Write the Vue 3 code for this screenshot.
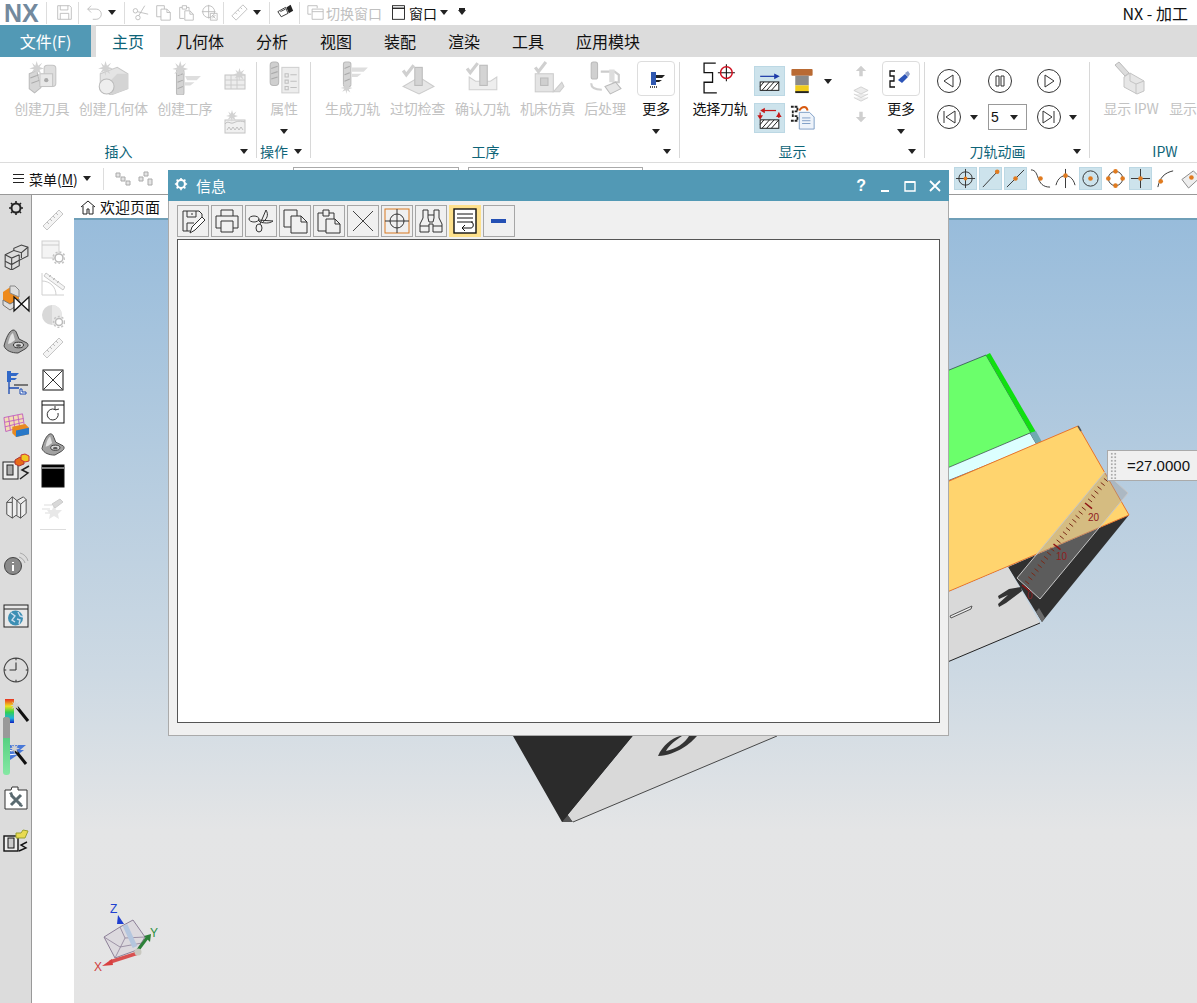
<template>
  <div class="app">
    <!-- 图标定义 -->
    <svg class="defs" width="0" height="0">
      <defs>
        <symbol id="spark" viewBox="0 0 16 16"><polygon points="8,0 9.5,5 14,2 11,6.5 16,8 11,9.5 13,14 8.5,11 8,16 6.5,11 2,13 5,9 0,8 5,6.5 3,2 6.5,5" fill="#d2d2d2" /></symbol>
        <symbol id="gCutter" viewBox="0 0 32 32"><path d="M4 12l7-3 4 16-6 5-5-4z" fill="#d6d6d6" stroke="#bbb" /><path d="M5 16l8-3M6 21l8-3" stroke="#aaa" /><rect x="18" y="4" width="11" height="20" rx="3" fill="#dedede" stroke="#c4c4c4" /><rect x="14" y="12" width="12" height="12" fill="#e8e8e8" stroke="#c4c4c4" /><circle cx="20" cy="18" r="2" fill="#aaa" /><use href="#spark" x="4" y="0" width="14" height="14" /></symbol>
        <symbol id="gBlock" viewBox="0 0 32 32"><polygon points="4,12 20,6 30,12 30,26 14,32 4,26" fill="#e4e4e4" stroke="#c8c8c8" /><polygon points="20,12 30,12 30,26 14,32 14,18" fill="#d4d4d4" /><circle cx="10" cy="24" r="7" fill="#eee" stroke="#bbb" /><use href="#spark" x="2" y="0" width="14" height="14" /></symbol>
        <symbol id="gOper" viewBox="0 0 32 32"><rect x="8" y="8" width="7" height="24" rx="2" fill="#d4d4d4" stroke="#bbb" /><path d="M9 14l5-2M9 20l5-2M9 26l5-2" stroke="#aaa" /><path d="M16 14h15l-4 4h-9zM16 20h9l-4 3h-5z" fill="#dedede" /><use href="#spark" x="4" y="0" width="15" height="15" /></symbol>
        <symbol id="gGridStar" viewBox="0 0 24 24"><rect x="2" y="8" width="20" height="14" fill="#ededed" stroke="#c4c4c4" /><path d="M2 13h20M2 18h20M8 8v14M14 8v14" stroke="#ccc" /><use href="#spark" x="10" y="1" width="13" height="13" /></symbol>
        <symbol id="gWave" viewBox="0 0 24 24"><rect x="2" y="10" width="20" height="13" fill="#f0f0f0" stroke="#c4c4c4" /><path d="M2 14c3-4 5 0 8-1s5-3 12-1M4 20l2-3 2 3 2-3 2 3 2-3 2 3 2-3 2 3" fill="none" stroke="#c0c0c0" /><use href="#spark" x="3" y="0" width="12" height="12" /></symbol>
        <symbol id="gAttr" viewBox="0 0 32 32"><rect x="14" y="6" width="16" height="24" fill="#ededed" stroke="#d0d0d0" /><path d="M17 12h3v3h-3zM17 18h3v3h-3zM17 24h3v3h-3zM22 13h6M22 19h6M22 25h6" fill="none" stroke="#c0c0c0" /><rect x="3" y="1" width="8" height="22" rx="3" fill="#cfcfcf" stroke="#b8b8b8" /><path d="M4 7l6-2M4 12l6-2M4 17l6-2" stroke="#aaa" /></symbol>
        <symbol id="gGen" viewBox="0 0 32 32"><rect x="7" y="1" width="7" height="23" rx="2" fill="#d4d4d4" stroke="#bbb" /><path d="M8 7l5-2M8 13l5-2M8 19l5-2" stroke="#aaa" /><path d="M15 6h15l-4 4H15zM15 12h9l-4 3h-5z" fill="#dedede" /><use href="#spark" x="3" y="20" width="14" height="11" /></symbol>
        <symbol id="gGouge" viewBox="0 0 32 32"><polygon points="2,24 14,17 20,17 31,24 17,31" fill="#e6e6e6" stroke="#ccc" /><rect x="13" y="6" width="7" height="17" fill="#d4d4d4" stroke="#bbb" /><path d="M2 9l3 4 7-9" fill="none" stroke="#d0d0d0" stroke-width="3" /></symbol>
        <symbol id="gVerify" viewBox="0 0 32 32"><path d="M3 15v12h26V15l-6 4H9z" fill="#eee" stroke="#d0d0d0" /><rect x="13" y="4" width="7" height="19" fill="#d4d4d4" stroke="#bbb" /><path d="M1 7l3 4 7-9" fill="none" stroke="#d0d0d0" stroke-width="3" /></symbol>
        <symbol id="gMachine" viewBox="0 0 32 32"><rect x="4" y="12" width="17" height="17" fill="#e4e4e4" stroke="#ccc" /><rect x="9" y="16" width="7" height="7" fill="#cfcfcf" stroke="#bbb" /><path d="M21 29l8-9 2 4-4 5z" fill="#ddd" stroke="#ccc" /><path d="M4 6l3 4 7-9" fill="none" stroke="#d0d0d0" stroke-width="3" /></symbol>
        <symbol id="gPost" viewBox="0 0 32 32"><rect x="3" y="1" width="6" height="16" rx="2" fill="#d0d0d0" stroke="#bbb" /><path d="M12 10h13l4 3v7H23" fill="none" stroke="#ccc" stroke-width="2" /><rect x="20" y="8" width="5" height="12" fill="#ddd" /><polygon points="16,24 26,20 31,26 21,31" fill="#e6e6e6" stroke="#bbb" /><path d="M3 21c0 5 4 6 10 6" fill="none" stroke="#d0d0d0" stroke-width="2" /></symbol>
        <symbol id="moreDrill" viewBox="0 0 24 24"><rect x="7" y="5" width="5" height="13" fill="#3058b0" /><path d="M12 8h9l-3 3h-6zM12 13h6l-3 2h-3z" fill="#222" /><path d="M6 20h7" stroke="#555" stroke-width="2" stroke-dasharray="1 1" /></symbol>
        <symbol id="pickPath" viewBox="0 0 32 32"><path d="M12 2H1v9h8v9H1v10h12" fill="none" stroke="#111" stroke-width="1.2" /><path d="M14 11h16M22 3v16" stroke="#111" stroke-width="1" /><circle cx="22" cy="11" r="5.5" fill="none" stroke="#d01020" stroke-width="1.4" /></symbol>
        <symbol id="hatchOne" viewBox="0 0 30 30"><path d="M5 10h19" stroke="#1c3aa8" stroke-width="1.3" /><polygon points="20,7 26,10 20,13" fill="#1c3aa8" /><rect x="5" y="16" width="20" height="9" fill="#fff" stroke="#111" /><path d="M7 25l8-9M12 25l8-9M17 25l8-9M5 21l4-5" stroke="#111" /></symbol>
        <symbol id="hatchTwo" viewBox="0 0 30 30"><path d="M8 7h14" stroke="#c41818" stroke-width="1.3" /><polygon points="10,4 5,7 10,10" fill="#c41818" /><path d="M5 9v6M25 9v6" stroke="#c41818" stroke-width="1.3" /><polygon points="2,12 8,12 5,17" fill="#c41818" /><polygon points="22,14 28,14 25,9" fill="#c41818" /><rect x="5" y="17" width="20" height="9" fill="#fff" stroke="#111" /><path d="M7 26l8-9M12 26l8-9M17 26l8-9M5 22l4-5" stroke="#111" /></symbol>
        <symbol id="toolColor" viewBox="0 0 24 28"><rect x="1" y="1" width="22" height="7" rx="1" fill="#b96a33" /><rect x="5" y="8" width="14" height="10" fill="#8a8a8a" /><rect x="5" y="18" width="14" height="7" fill="#f0cc1c" /><path d="M5 25h14" stroke="#222" stroke-width="2" /></symbol>
        <symbol id="docOut" viewBox="0 0 28 28"><path d="M1 3h7v5H3v5h5v5H1" fill="none" stroke="#222" stroke-width="2" stroke-dasharray="3 1" /><path d="M10 9h11l5 5v13H10z" fill="#eef3fa" stroke="#7a9ac4" /><path d="M13 15h9M13 18h9M13 21h9" stroke="#7a9ac4" /><path d="M10 7c3-5 8-5 9 0" fill="none" stroke="#d85a10" stroke-width="2" /></symbol>
        <symbol id="upArrow" viewBox="0 0 14 14"><path d="M7 1l6 6H9v6H5V7H1z" fill="#cfcfcf" /></symbol>
        <symbol id="downArrow" viewBox="0 0 14 14"><path d="M7 13L1 7h4V1h4v6h4z" fill="#cfcfcf" /></symbol>
        <symbol id="layers" viewBox="0 0 18 18"><path d="M1 5l8-4 8 4-8 4zM1 9l8 4 8-4M1 13l8 4 8-4" fill="#ececec" stroke="#cfcfcf" /></symbol>
        <symbol id="moreTorch" viewBox="0 0 24 24"><path d="M6 4H1v5h4v5H1v6h5" fill="none" stroke="#111" stroke-width="1.3" /><path d="M9 13l7-6 3 3-6 6z" fill="#2c54b8" /><path d="M16 6l3-2 2 3-2 3z" fill="#8fa0c8" /></symbol>
        <symbol id="ipw" viewBox="0 0 34 34"><path d="M1 4l4-3 10 11-4 3z" fill="#dcdcdc" stroke="#bbb" /><path d="M10 26V16l6-4 14 8v10l-7 3z" fill="#e6e6e6" stroke="#c4c4c4" /><path d="M16 12v8l6 3v10M22 23l8-3" fill="none" stroke="#c4c4c4" /></symbol>

        <symbol id="save" viewBox="0 0 20 20"><path d="M2 2h14l2 2v14H2z" fill="none" stroke="currentColor" /><path d="M5 2v5h9V2M5 18v-7h10v7" fill="none" stroke="currentColor" /></symbol>
        <symbol id="undo" viewBox="0 0 20 20"><path d="M2 6h10a5.5 5.5 0 0 1 0 12H8M6 2L2 6l4 4" fill="none" stroke="currentColor" /></symbol>
        <symbol id="scissors" viewBox="0 0 20 20"><circle cx="4" cy="8" r="2.6" fill="none" stroke="currentColor" /><circle cx="7" cy="16" r="2.6" fill="none" stroke="currentColor" /><path d="M6.3 9L19 12M8 13.6L15 2" fill="none" stroke="currentColor" /></symbol>
        <symbol id="copy" viewBox="0 0 20 20"><path d="M2 2h9v4M7 6h7l4 4v9H7zM7 15H2V2M14 6v4h4" fill="none" stroke="currentColor" /></symbol>
        <symbol id="paste" viewBox="0 0 20 20"><path d="M7 17H2V4h3V2h5v2h3v3M5 4v2h5V4M8 8h6l4 4v7H8zM14 8v4h4" fill="none" stroke="currentColor" /></symbol>
        <symbol id="deleteBox" viewBox="0 0 20 20"><circle cx="9" cy="9" r="7" fill="none" stroke="currentColor" /><path d="M9 1v16M1 9h16M11 11h8v8h-8zM13 13l4 4M17 13l-4 4" fill="none" stroke="currentColor" /></symbol>
        <symbol id="ruler" viewBox="0 0 20 20"><path d="M14 1l5 5L6 19l-5-5z" fill="none" stroke="currentColor" /><path d="M5 10l2 2M8 7l2 2M11 4l2 2" stroke="currentColor" /></symbol>
        <symbol id="flash" viewBox="0 0 20 20"><path d="M1 9l9-5 3 7-8 4z" fill="#fff" stroke="#222" /><path d="M11 4l5-3 3 7-5 3z" fill="#222" /><path d="M4 9l6-3" stroke="#222" /></symbol>
        <symbol id="winSwitch" viewBox="0 0 20 20"><path d="M1 2h11v3M1 2v10h4M6 6h13v12H6zM6 9h13" fill="none" stroke="currentColor" /></symbol>
        <symbol id="window" viewBox="0 0 16 20"><rect x="1" y="2" width="14" height="16" fill="#fff" stroke="#111" /><path d="M1 5h14" stroke="#111" stroke-width="1.5" /></symbol>

        <symbol id="tbSave" viewBox="0 0 26 26"><path d="M3 23V3h16l3 3v5M7 3v6h9V3M12 5v2M3 23h7M7 23v-8h7" fill="none" stroke="#333" /><path d="M10 25l2-6 10-10 3 3-10 10z" fill="#fff" stroke="#333" /></symbol>
        <symbol id="tbPrint" viewBox="0 0 26 26"><path d="M7 8V2h12v6M7 20H2V8h22v12h-5M7 13h12v11H7z" fill="none" stroke="#333" /></symbol>
        <symbol id="tbCut" viewBox="0 0 26 26"><ellipse cx="6" cy="11" rx="5" ry="3" fill="none" stroke="#333" /><ellipse cx="11" cy="20" rx="3" ry="4" fill="none" stroke="#333" /><path d="M10 12l15 1c-4 3-9 2-13 1zM12 16l6-14c3 5 1 9-4 13" fill="none" stroke="#333" /></symbol>
        <symbol id="tbCopy" viewBox="0 0 26 26"><path d="M9 19H2V2h13v6M9 8h10l6 6v11H9zM19 8v6h6" fill="none" stroke="#333" /></symbol>
        <symbol id="tbPaste" viewBox="0 0 26 26"><path d="M10 23H2V5h5V2h6v3h5v6M7 5v3h6V5M10 11h9l5 5v9H10zM19 11v5h5" fill="none" stroke="#333" /></symbol>
        <symbol id="tbX" viewBox="0 0 26 26"><path d="M3 3l20 20M23 3L3 23" stroke="#444" /></symbol>
        <symbol id="tbCross" viewBox="0 0 26 26"><rect x="1" y="1" width="24" height="24" fill="none" stroke="#d87820" /><circle cx="13" cy="13" r="7" fill="none" stroke="#333" /><path d="M1 13h24M13 1v24" stroke="#333" /></symbol>
        <symbol id="tbBino" viewBox="0 0 26 26"><path d="M5 2h5v8l1 4h4l1-4V2h5v8l3 6v8h-9v-8h-4v8H2v-8l3-6zM2 18h9M15 18h9M10 7h6" fill="none" stroke="#333" /></symbol>
        <symbol id="tbWrap" viewBox="0 0 26 26"><rect x="2" y="1" width="22" height="24" fill="#fff" stroke="#111" stroke-width="1.4" /><path d="M5 6h16M5 10h16M5 14h16M19 14c3 0 3 6 0 6H10M13 17l-3 3 3 3" fill="none" stroke="#111" /></symbol>
        <symbol id="tbMinus" viewBox="0 0 26 26"><rect x="5" y="11" width="15" height="4" fill="#2450b4" /></symbol>

        <symbol id="sCenter" viewBox="0 0 22 22"><circle cx="11" cy="11" r="7" fill="none" stroke="#333" /><path d="M1 11h20M11 1v20" stroke="#333" /><circle cx="11" cy="11" r="2" fill="#e07b20" /></symbol>
        <symbol id="sEnd" viewBox="0 0 22 22"><path d="M3 20L18 4" stroke="#333" /><circle cx="18" cy="4" r="2.4" fill="#e07b20" /></symbol>
        <symbol id="sMid" viewBox="0 0 22 22"><path d="M2 20L20 2" stroke="#333" /><circle cx="11" cy="11" r="2.4" fill="#e07b20" /></symbol>
        <symbol id="sCurve" viewBox="0 0 22 22"><path d="M1 2c10 0 4 18 20 18" fill="none" stroke="#333" /><circle cx="11" cy="11" r="2.4" fill="#e07b20" /></symbol>
        <symbol id="sTee" viewBox="0 0 22 22"><path d="M1 18c2-8 7-10 10-10s8 2 10 10M11 1v20" fill="none" stroke="#333" /><circle cx="11" cy="8" r="2.4" fill="#e07b20" /></symbol>
        <symbol id="sRing" viewBox="0 0 22 22"><circle cx="11" cy="11" r="8" fill="none" stroke="#333" /><circle cx="11" cy="11" r="2.4" fill="#e07b20" /></symbol>
        <symbol id="sQuad" viewBox="0 0 22 22"><circle cx="11" cy="11" r="7.5" fill="none" stroke="#333" /><circle cx="11" cy="3.5" r="2.4" fill="#e07b20" /><circle cx="11" cy="18.5" r="2.4" fill="#e07b20" /><circle cx="3.5" cy="11" r="2.4" fill="#e07b20" /><circle cx="18.5" cy="11" r="2.4" fill="#e07b20" /></symbol>
        <symbol id="sPlus" viewBox="0 0 22 22"><path d="M1 11h20M11 1v20" stroke="#333" /><circle cx="11" cy="11" r="2.4" fill="#e07b20" /></symbol>
        <symbol id="sArc" viewBox="0 0 22 22"><path d="M3 20C5 10 10 5 19 3" fill="none" stroke="#333" /><circle cx="6" cy="14" r="2.4" fill="#e07b20" /></symbol>
        <symbol id="sFace" viewBox="0 0 22 22"><polygon points="2,12 14,3 21,10 9,21" fill="#eee" stroke="#888" /><circle cx="12" cy="10" r="2.4" fill="#e07b20" /></symbol>

        <symbol id="rGear" viewBox="0 0 16 16"><circle cx="8" cy="8" r="4.5" fill="none" stroke="#222" stroke-width="2" /><path d="M8 1v2.5M8 12.5V15M1 8h2.5M12.5 8H15M3 3l1.700 1.700M11.300 11.300L13 13M13 3l-1.700 1.700M4.700 11.300L3 13" stroke="#222" stroke-width="1.6" /></symbol>
        <symbol id="rBlocks" viewBox="0 0 24 24"><path d="M2 10l8-4V4l7-3 6 2v8l-8 4v5l-7 4-6-3z" fill="#dcdcdc" stroke="#444" /><path d="M2 10l6 3 7-3M8 13v11M2 16l6 3 7-4M10 6l7 2 6-5M17 8v5M15 10v5" fill="none" stroke="#444" /></symbol>
        <symbol id="rOrange" viewBox="0 0 28 28"><polygon points="1,7 10,1 17,5 17,19 8,25 1,20" fill="#ee8a1c" /><polygon points="1,15 8,19 17,14 17,19 8,25 1,20" fill="#ddd" stroke="#777" /><polygon points="8,1 13,1 17,5 17,12 8,8" fill="#ddd" stroke="#888" /><path d="M12 12l15 14V12L12 26z" fill="#fff" stroke="#111" stroke-width="1.2" /></symbol>
        <symbol id="rPart" viewBox="0 0 26 26"><path d="M1 18C3 10 6 3 10 2c2 0 3 1 4 4l2 5 8 4c2 2 1 4-2 6l-7 4C9 25 3 23 1 18z" fill="#a2a2a2" stroke="#444" /><path d="M5 16c1-6 3-10 5-11l2 7-4 3z" fill="#e2e2e2" /><ellipse cx="15.500" cy="17" rx="5" ry="2.800" fill="#d8d8d8" stroke="#333" /><ellipse cx="15.500" cy="17.500" rx="2.500" ry="1.300" fill="#555" /></symbol>
        <symbol id="rTree" viewBox="0 0 24 24"><rect x="3" y="0" width="4" height="11" fill="#3068c8" /><path d="M7 2h8l-3 3H7zM7 7h6l-2 2H7z" fill="#3068c8" /><path d="M5 11v12M5 17h10" stroke="#1848b0" stroke-width="1.3" /><path d="M10 14h14" stroke="#111" /><path d="M16 18h2v3h4v2h-6z" fill="#fff" stroke="#1848b0" /></symbol>
        <symbol id="rTable" viewBox="0 0 28 26"><polygon points="1,5 21,1 23,14 3,20" fill="#f3ddb4" stroke="#c060c0" /><path d="M6 4l2 15M11 3l2 15M16 2l2 14M2 10l20-4M2 15l20-5" stroke="#c060c0" /><polygon points="10,15 24,12 28,16 28,23 14,26 10,22" fill="#e88a20" /><polygon points="14,19 28,16 28,23 14,26" fill="#2878c8" /></symbol>
        <symbol id="rMach" viewBox="0 0 28 28"><rect x="1" y="9" width="15" height="17" fill="#eee" stroke="#222" /><rect x="5" y="12" width="6" height="10" fill="#aaa" stroke="#222" /><path d="M18 26l8-6-6-3 7-4" fill="none" stroke="#222" stroke-width="1.5" /><path d="M13 7l5-3 4 2v5l-5 2-4-2z" fill="#e86a18" stroke="#a33" /><path d="M19 2l4-1 4 2v5l-4 1-4-2z" fill="#f0c820" stroke="#c33" /></symbol>
        <symbol id="rBooks" viewBox="0 0 24 26"><path d="M2 8l6-6 5 4 7-4 3 3v15l-6 5-5-3-4 3-6-4z" fill="#eee" stroke="#444" /><path d="M8 2v6L2 8M8 8v17M13 6v16M17 25V10l-4-4M17 10l6-5" fill="none" stroke="#444" /></symbol>
        <symbol id="rInfo" viewBox="0 0 26 26"><circle cx="10" cy="16" r="8.5" fill="#8a8a8a" stroke="#444" /><path d="M10 12v1M10 15v6" stroke="#fff" stroke-width="2" /><path d="M16 7c3 1 5 3 6 6M17 3c4 1 7 4 8 8" fill="none" stroke="#aaa" /></symbol>
        <symbol id="rGlobe" viewBox="0 0 26 24"><rect x="1" y="1" width="24" height="22" fill="#e8e8e8" stroke="#222" /><path d="M1 5h24" stroke="#222" /><circle cx="12.500" cy="14" r="7.500" fill="#3d8fb4" /><path d="M8 9l4 3-3 4 3 2M15 8l2 4 3 1M14 15l3 1-1 4" fill="none" stroke="#cde" stroke-width="1.4" /></symbol>
        <symbol id="rClock" viewBox="0 0 24 24"><circle cx="12" cy="12" r="11" fill="none" stroke="#444" /><path d="M12 12V5M12 12H6M12 1v2M12 21v2M1 12h2M21 12h2" stroke="#333" /></symbol>
        <symbol id="rFringe" viewBox="0 0 28 28"><defs><linearGradient id="rainbow" x1="0" x2="0" y1="0" y2="1"><stop offset="0" stop-color="#e83020" /><stop offset=".3" stop-color="#f0e020" /><stop offset=".55" stop-color="#30d050" /><stop offset=".8" stop-color="#20b0e0" /><stop offset="1" stop-color="#1020c0" /></linearGradient></defs><rect x="3" y="1" width="9" height="24" fill="url(#rainbow)" /><path d="M14 8l12 15" stroke="#111" stroke-width="3" /><use href="#spark" x="8" y="2" width="11" height="11" /></symbol>
        <symbol id="rWand" viewBox="0 0 28 28"><path d="M4 4h20l-6 5 4 0-8 6-6 4z" fill="#4878d8" /><path d="M4 9l10 1M5 14l10-1" stroke="#fff" /><path d="M12 8l12 15" stroke="#111" stroke-width="3" /><use href="#spark" x="7" y="2" width="11" height="11" /></symbol>
        <symbol id="rTools" viewBox="0 0 24 24"><path d="M1 4h6l1-3h6v3h9v19H1z" fill="#fff" stroke="#333" /><path d="M7 19L17 9M7 9l10 10" stroke="#5a6a70" stroke-width="3" /><path d="M5 7l3-1 1 3-2 1zM16 18l3 1-1 2-3-1z" fill="#5a6a70" /></symbol>
        <symbol id="rMachFolder" viewBox="0 0 26 26"><rect x="1" y="8" width="14" height="15" fill="#eee" stroke="#111" stroke-width="1.4" /><rect x="5" y="10" width="6" height="10" fill="#ccc" stroke="#111" /><path d="M16 23l7-3-5-3 6-3" fill="none" stroke="#111" stroke-width="1.4" /><path d="M13 5h5l2-3 5 1-3 7H13z" fill="#e8da50" stroke="#99a030" /></symbol>

        <symbol id="pRuler" viewBox="0 0 24 24"><path d="M18 2l4 4L6 22l-4-4z" fill="#f4f4f4" stroke="#c6c6c6" /><path d="M6 14l2 2M9 11l2 2M12 8l2 2M15 5l2 2" stroke="#bbb" /></symbol>
        <symbol id="pWinGear" viewBox="0 0 24 24"><rect x="1" y="1" width="17" height="17" fill="#f4f4f4" stroke="#d0d0d0" /><path d="M1 5h17" stroke="#ccc" /><circle cx="18" cy="18" r="4" fill="#fff" stroke="#bbb" stroke-width="1.6" /><circle cx="18" cy="18" r="6" fill="none" stroke="#c4c4c4" stroke-dasharray="2 2" stroke-width="1.6" /></symbol>
        <symbol id="pAngle" viewBox="0 0 24 24"><path d="M1 1v22h22" fill="none" stroke="#d0d0d0" /><path d="M1 9c8 0 14 6 14 14" fill="none" stroke="#d0d0d0" /><path d="M5 1l19 14-2 3L3 4z" fill="#f4f4f4" stroke="#c8c8c8" /><path d="M8 5l2-2M12 8l2-2M16 11l2-2" stroke="#bbb" /></symbol>
        <symbol id="pDisc" viewBox="0 0 24 24"><circle cx="11" cy="11" r="10" fill="#d8d8d8" /><path d="M11 1a10 10 0 0 1 0 20z" fill="#e8e8e8" /><circle cx="18" cy="18" r="3.500" fill="#fff" stroke="#bbb" stroke-width="1.5" /><circle cx="18" cy="18" r="5.500" fill="none" stroke="#c4c4c4" stroke-dasharray="2 2" stroke-width="1.5" /></symbol>
        <symbol id="pCross" viewBox="0 0 24 24"><rect x="2" y="2" width="20" height="20" fill="#fff" stroke="#111" /><path d="M3 3l18 18M21 3L3 21" stroke="#333" /></symbol>
        <symbol id="pRotate" viewBox="0 0 24 24"><rect x="1" y="1" width="22" height="22" fill="#fff" stroke="#111" /><path d="M1 5h22" stroke="#111" /><path d="M17 13a5.500 5.500 0 1 1-3-3.500M14 6l0 4 4-1" fill="none" stroke="#333" /></symbol>
        <symbol id="pBlack" viewBox="0 0 24 24"><rect x="1" y="1" width="22" height="22" fill="#000" stroke="#111" /><path d="M1 4h22" stroke="#fff" /></symbol>
        <symbol id="pStar" viewBox="0 0 24 24"><path d="M3 9h8M1 13h8M4 17h6" stroke="#ddd" /><polygon points="13,9 15,14 21,14 17,18 18,23 13,20 8,23 9,18 6,14 11,14" fill="#e8e8e8" /><path d="M11 8l8-5 3 3-8 6z" fill="#d8d8d8" stroke="#ccc" /></symbol>
        <symbol id="home" viewBox="0 0 16 16"><path d="M1 8l7-6 7 6M3 7v8h4v-5h2v5h4V7" fill="none" stroke="#222" /></symbol>
      </defs>
    </svg>

    <header class="quick">
      <span class="logo">NX</span>
      <template v-for="(item, i) in quickItems" :key="i">
        <i v-if="item.type === 'sep'" class="qsep"></i>
        <i v-else-if="item.type === 'caret'" class="caret qcaret"></i>
        <svg v-else class="qicon" :class="{ live: item.live }"><use :href="'#' + item.icon" /></svg>
        <span v-if="item.text" class="qtext" :class="{ live: item.live }">{{ item.text }}</span>
      </template>
      <i class="caret qcaret bar"></i>
      <span class="apptitle">NX - 加工</span>
    </header>

    <nav class="tabs">
      <span class="tab file">文件(F)</span>
      <span v-for="(t, i) in tabs" :key="t" class="tab" :class="{ on: i === 0 }">{{ t }}</span>
    </nav>

    <section class="ribbon">
      <div class="group g1">
        <div class="gbody">
          <div v-for="b in insertBtns" :key="b.text" class="big off w71">
            <svg class="bigicon"><use :href="'#' + b.icon" /></svg><span>{{ b.text }}</span>
          </div>
          <div class="stack">
            <svg class="sm"><use href="#gGridStar" /></svg>
            <svg class="sm"><use href="#gWave" /></svg>
          </div>
        </div>
        <div class="glabel"><span>插入</span><i class="caret"></i></div>
      </div>

      <div class="group g2">
        <div class="gbody">
          <div class="big off fill">
            <svg class="bigicon"><use href="#gAttr" /></svg><span>属性</span><i class="caret down"></i>
          </div>
        </div>
        <div class="glabel"><span>操作</span><i class="caret"></i></div>
      </div>

      <div class="group g3">
        <div class="gbody">
          <div v-for="b in operBtns" :key="b.text" class="big off" :style="{ width: b.w + 'px' }">
            <svg class="bigicon"><use :href="'#' + b.icon" /></svg><span>{{ b.text }}</span>
          </div>
          <div class="big more">
            <div class="morebox"><svg class="mi"><use href="#moreDrill" /></svg></div>
            <span>更多</span><i class="caret down"></i>
          </div>
        </div>
        <div class="glabel"><span>工序</span><i class="caret"></i></div>
      </div>

      <div class="group g4">
        <div class="gbody">
          <div class="big pick">
            <svg class="bigicon"><use href="#pickPath" /></svg><span>选择刀轨</span>
          </div>
          <div class="hatchcol">
            <div class="hatch"><svg><use href="#hatchOne" /></svg></div>
            <div class="hatch"><svg><use href="#hatchTwo" /></svg></div>
          </div>
          <div class="colorcol">
            <div class="withcaret"><svg class="tc"><use href="#toolColor" /></svg><i class="caret"></i></div>
            <svg class="tc doc"><use href="#docOut" /></svg>
          </div>
          <div class="arrows">
            <svg class="arr"><use href="#upArrow" /></svg>
            <svg class="lay"><use href="#layers" /></svg>
            <svg class="arr"><use href="#downArrow" /></svg>
          </div>
          <div class="big more">
            <div class="morebox"><svg class="mi"><use href="#moreTorch" /></svg></div>
            <span>更多</span><i class="caret down"></i>
          </div>
        </div>
        <div class="glabel"><span>显示</span><i class="caret"></i></div>
      </div>

      <div class="group g5">
        <div class="player">
          <div class="pcell">
            <svg class="circle" viewBox="0 0 24 24"><circle cx="12" cy="12" r="11.500" /><path d="M16 6v12L7 12z" /></svg>
          </div>
          <div class="pcell mid">
            <svg class="circle" viewBox="0 0 24 24"><circle cx="12" cy="12" r="11.500" /><path d="M8 7h3v10H8zM13 7h3v10h-3z" /></svg>
          </div>
          <div class="pcell last">
            <svg class="circle" viewBox="0 0 24 24"><circle cx="12" cy="12" r="11.500" /><path d="M8 6v12l9-6z" /></svg>
          </div>
          <div class="pcell">
            <svg class="circle" viewBox="0 0 24 24"><circle cx="12" cy="12" r="11.500" /><path d="M7 6v12M18 6v12L9 12z" /></svg><i class="caret"></i>
          </div>
          <div class="pcell mid">
            <div class="speed"><span>5</span><i class="caret"></i></div>
          </div>
          <div class="pcell last">
            <svg class="circle" viewBox="0 0 24 24"><circle cx="12" cy="12" r="11.500" /><path d="M17 6v12M6 6v12l9-6z" /></svg><i class="caret"></i>
          </div>
        </div>
        <div class="glabel"><span>刀轨动画</span><i class="caret"></i></div>
      </div>

      <div class="group g6">
        <div class="gbody">
          <div class="big off ipw">
            <svg class="bigicon"><use href="#ipw" /></svg><span>显示 IPW</span>
          </div>
          <div class="big off ipw next"><span class="blank"></span><span>显示</span></div>
        </div>
        <div class="glabel"><span>IPW</span></div>
      </div>
    </section>

    <div class="selbar">
      <span class="menu"><span class="burger"></span>菜单(<u>M</u>)<i class="caret"></i></span>
      <i class="selsep"></i>
      <svg class="seli" viewBox="0 0 16 16"><path d="M1 2h4v4H1zM6 6h4v4H6zM11 10h4v4h-4z" fill="#e4e4e4" stroke="#aaa" /></svg>
      <svg class="seli" viewBox="0 0 16 16"><path d="M6 1h4v4H6zM1 6h4v4H1zM10 8h4v6h-4z" fill="#e4e4e4" stroke="#aaa" /></svg>
      <span class="filter one"></span>
      <span class="filter two"></span>
      <div class="snaps">
        <span v-for="(s, i) in snaps" :key="i" class="snap" :class="{ on: s.on }">
          <svg><use :href="'#' + s.icon" /></svg>
        </span>
      </div>
    </div>

    <main class="body">
      <aside class="rail">
        <svg v-for="r in railIcons" :key="r.icon + r.top" class="railicon" :style="{ marginTop: r.top + 'px', width: r.size + 'px', height: r.size + 'px' }"><use :href="'#' + r.icon" /></svg>
        <div class="railscroll"><i></i></div>
      </aside>
      <aside class="rail2">
        <span v-for="(p, i) in paletteIcons" :key="i" class="palitem"><svg><use :href="'#' + p" /></svg></span>
        <hr />
      </aside>
      <div class="stage">
        <div class="doctabs"><span class="doctab"><svg><use href="#home" /></svg>欢迎页面</span></div>
        <div class="view">
          <svg class="scene" viewBox="74 220 1123 783">
            <!-- 模型 -->
            <polygon points="900,390 986,355 1031,433 900,490" fill="#6bff6b" stroke="#123" stroke-width=".6" />
            <polygon points="986,355 990,353 1036,432 1031,433" fill="#10e010" />
            <polygon points="900,488 1030,433 1037,445 900,500" fill="#dcffff" stroke="#223" stroke-width=".6" />
            <polygon points="1030,433 1036,431 1042,442 1037,445" fill="#6faab0" />
            <polygon points="1129,515 1042,622 1008,567" fill="#303030" />
            <polygon points="900,502 1078,426 1129,515 900,612" fill="#ffd46e" stroke="#e8742a" stroke-width="1" />
            <path d="M1078 426l3 5" stroke="#555" stroke-width="1.500" />
            <polygon points="900,613 1008,567 1040,623 900,682" fill="#d9d9d9" />
            <path d="M900 682L1040 623" stroke="#222" stroke-width="1" />
            <polygon points="1036,612 1042,622 1045,618 1039,608" fill="#6a6a6a" />
            <path d="M950 616l22-10-1 3-20 9z" fill="#eee" stroke="#555" />
            <path d="M1021 587l-12 2-11 7 1 3 9-4-10 9 1 3 7-4 16-12z" fill="#333" />
            <!-- 下方模型 -->
            <polygon points="513,736 633,736 568,815 573,822 562,822" fill="#2b2b2b" />
            <polygon points="562,822 568,815 573,822" fill="#555" />
            <polygon points="633,736 777,736 573,822 568,815" fill="#d9d9d9" />
            <path d="M777 736L573 822" stroke="#222" stroke-width=".8" />
            <path d="M658 756c4-10 14-18 22-20h17c-6 7-20 19-39 20z" fill="#333" />
            <path d="M666 751c3-6 10-11 16-15h7c-4 7-13 13-23 15z" fill="#d9d9d9" />
            <!-- 标尺 -->
            <polygon points="1105,472 1128,493 1040,599 1017,578" fill="#9a9a9a" fill-opacity=".42" stroke="#c6c6c6" />
            <line v-for="t in rulerTicks" :key="t.i" :x1="t.x1" :y1="t.y1" :x2="t.x2" :y2="t.y2" :stroke="t.major ? '#8e1414' : '#7a2a18'" :stroke-width="t.major ? 1.5 : 1" />
            <text x="1088" y="521" class="rtext">20</text>
            <text x="1056" y="560" class="rtext">10</text>
            <text x="1027" y="599" class="rtext">0</text>
            <!-- 坐标系 -->
            <polygon points="104,937 120,927 133,920 145,937 137,950 115,958" fill="#dcd9de" stroke="#8d8098" />
            <path d="M120 927l5 11 20-1M125 938l-10 20M104 937l16 10 22-4" fill="none" stroke="#8d8098" stroke-width=".8" />
            <path d="M125 925l10 22" stroke="#b4c6de" stroke-width="5" />
            <polygon points="117,924 124,924 118,915" fill="#1f3fd0" />
            <path d="M138 950l9-12" stroke="#2c8038" stroke-width="3" />
            <polygon points="144,936 150,942 151,934" fill="#2c8038" />
            <path d="M138 953l-28 9" stroke="#d85050" stroke-width="3.500" />
            <polygon points="112,959 113,965 102,966" fill="#d84040" />
            <circle cx="138" cy="952" r="3.500" fill="#c8c8c0" />
            <text x="110" y="913" class="axis" fill="#2040d0">Z</text>
            <text x="150" y="937" class="axis" fill="#2c9040">Y</text>
            <text x="94" y="971" class="axis" fill="#d04040">X</text>
          </svg>
          <div class="readout"><span class="grip"></span><span>=27.0000</span></div>
        </div>
      </div>
    </main>

    <!-- 信息窗口 -->
    <section class="dialog">
      <div class="dtitle">
        <svg class="dgear" viewBox="0 0 16 16"><circle cx="8" cy="8" r="4.500" fill="none" stroke="#fff" stroke-width="2.400" /><path d="M8 1v2.500M8 12.500V15M1 8h2.500M12.500 8H15M3 3l1.700 1.700M11.300 11.300L13 13M13 3l-1.700 1.700M4.700 11.300L3 13" stroke="#fff" stroke-width="1.800" /></svg>
        <span class="dname">信息</span>
        <span class="dq">?</span>
        <svg class="dctl min" viewBox="0 0 14 14"><path d="M2 12h8" stroke="#fff" stroke-width="2" /></svg>
        <svg class="dctl max" viewBox="0 0 14 14"><path d="M2 3h10v9H2z" fill="none" stroke="#fff" stroke-width="1.400" /><path d="M2 3h10" stroke="#fff" stroke-width="2" /></svg>
        <svg class="dctl close" viewBox="0 0 14 14"><path d="M2 2l10 10M12 2L2 12" stroke="#fff" stroke-width="1.800" /></svg>
      </div>
      <div class="dtools">
        <span v-for="b in dialogTools" :key="b" class="dbtn" :class="{ active: b === 'tbWrap' }"><svg><use :href="'#' + b" /></svg></span>
      </div>
      <div class="dtext"></div>
    </section>
  </div>
</template>

<script setup>
// 快速访问工具条
const quickItems = [
  { type: 'sep' },
  { icon: 'save' },
  { type: 'sep' },
  { icon: 'undo' },
  { type: 'caret' },
  { type: 'sep' },
  { icon: 'scissors' },
  { icon: 'copy' },
  { icon: 'paste' },
  { icon: 'deleteBox' },
  { type: 'sep' },
  { icon: 'ruler' },
  { type: 'caret' },
  { type: 'sep' },
  { icon: 'flash', live: true },
  { type: 'sep' },
  { icon: 'winSwitch', text: '切换窗口' },
  { icon: 'window', text: '窗口', live: true },
  { type: 'caret' }
];

const tabs = ['主页', '几何体', '分析', '视图', '装配', '渲染', '工具', '应用模块'];

const insertBtns = [
  { icon: 'gCutter', text: '创建刀具' },
  { icon: 'gBlock', text: '创建几何体' },
  { icon: 'gOper', text: '创建工序' }
];

const operBtns = [
  { icon: 'gGen', text: '生成刀轨', w: 65 },
  { icon: 'gGouge', text: '过切检查', w: 65 },
  { icon: 'gVerify', text: '确认刀轨', w: 65 },
  { icon: 'gMachine', text: '机床仿真', w: 65 },
  { icon: 'gPost', text: '后处理', w: 50 }
];

const snaps = [
  { icon: 'sCenter', on: true },
  { icon: 'sEnd', on: true },
  { icon: 'sMid', on: true },
  { icon: 'sCurve' },
  { icon: 'sTee' },
  { icon: 'sRing', on: true },
  { icon: 'sQuad' },
  { icon: 'sPlus', on: true },
  { icon: 'sArc' },
  { icon: 'sFace' }
];

const railIcons = [
  { icon: 'rGear', top: 5, size: 16 },
  { icon: 'rBlocks', top: 28, size: 26 },
  { icon: 'rOrange', top: 15, size: 28 },
  { icon: 'rPart', top: 15, size: 26 },
  { icon: 'rTree', top: 17, size: 24 },
  { icon: 'rTable', top: 17, size: 26 },
  { icon: 'rMach', top: 15, size: 28 },
  { icon: 'rBooks', top: 14, size: 24 },
  { icon: 'rInfo', top: 31, size: 26 },
  { icon: 'rGlobe', top: 27, size: 26 },
  { icon: 'rClock', top: 28, size: 26 },
  { icon: 'rFringe', top: 15, size: 28 },
  { icon: 'rWand', top: 15, size: 28 },
  { icon: 'rTools', top: 17, size: 24 },
  { icon: 'rMachFolder', top: 18, size: 26 }
];

const paletteIcons = ['pRuler', 'pWinGear', 'pAngle', 'pDisc', 'pRuler', 'pCross', 'pRotate', 'rPart', 'pBlack', 'pStar'];

const dialogTools = ['tbSave', 'tbPrint', 'tbCut', 'tbCopy', 'tbPaste', 'tbX', 'tbCross', 'tbBino', 'tbWrap', 'tbMinus'];

// 标尺刻度，0 点在 (1022,585)
const rulerTicks = Array.from({ length: 27 }, (_, i) => {
  const major = i % 10 === 0;
  const x1 = 1022 + i * 3.15;
  const y1 = 585 - i * 4.1;
  const len = major ? 9 : 5;
  return { i, major, x1, y1, x2: x1 + len * 0.78, y2: y1 + len * 0.62 };
});
</script>

<style>
body {
  margin: 0;
  background: #fff;
}
</style>

<style scoped>
.app {
  position: relative;
  width: 1197px;
  height: 1003px;
  overflow: hidden;
  display: flex;
  flex-direction: column;
  background: #fff;
  font-family: "Noto Sans CJK SC", "Liberation Sans", sans-serif;
  color: #111;
}

.defs {
  position: absolute;
}

.caret {
  display: inline-block;
  width: 0;
  height: 0;
  border-left: 4.5px solid transparent;
  border-right: 4.5px solid transparent;
  border-top: 5px solid #222;
}

/* 快速访问 */
.quick {
  height: 25px;
  display: flex;
  align-items: center;
  flex: none;
}

.logo {
  width: 46px;
  padding-left: 4px;
  box-sizing: border-box;
  font: bold 25px/24px "Liberation Sans", sans-serif;
  color: #73899d;
}

.qsep {
  width: 1px;
  height: 22px;
  margin: 0 4px 0 2px;
  background: #ddd;
}

.logo + .qsep {
  margin-left: 0;
  margin-right: 6px;
}

.qicon {
  width: 17px;
  height: 17px;
  margin: 0 3px;
  color: #b8b8b8;
}

.qicon.live {
  color: #222;
}

.qcaret {
  margin: 0 6px 0 2px;
}

.qcaret.bar {
  margin: 0 0 0 4px;
  box-shadow: 0 -3px 0 -1px #222;
}

.qtext {
  font-size: 14px;
  color: #c0c0c0;
  margin: 0 5px 0 -1px;
}

.qtext.live {
  color: #111;
  margin: 0 1px 0 -1px;
}

.apptitle {
  margin-left: auto;
  padding-right: 9px;
  font-size: 16px;
}

/* 选项卡 */
.tabs {
  height: 32px;
  display: flex;
  flex: none;
  background: #dcdcdc;
  font-size: 16px;
  line-height: 32px;
}

.tab {
  padding: 0 16px;
}

.tab.file {
  width: 91px;
  box-sizing: border-box;
  margin-right: 5px;
  padding: 0;
  text-align: center;
  background: #5299b5;
  color: #fff;
}

.tab.on {
  background: #fff;
  color: #0e6478;
  border-top: 1px solid #ccc;
  line-height: 31px;
}

/* 功能区 */
.ribbon {
  height: 106px;
  flex: none;
  display: flex;
  overflow: hidden;
  border-bottom: 1px solid #dcdcdc;
  box-sizing: border-box;
  font-size: 14px;
  letter-spacing: -0.2px;
}

.group {
  flex: none;
  display: flex;
  flex-direction: column;
  box-sizing: border-box;
  position: relative;
}

.group::after {
  content: "";
  position: absolute;
  right: 0;
  top: 5px;
  bottom: 4px;
  width: 1px;
  background: #d8d8d8;
}

.g1 { width: 257px; }
.g2 { width: 54px; }
.g3 { width: 369px; }
.g4 { width: 245px; }
.g5 { width: 165px; }
.g6 { width: 150px; }

.g1 .gbody { padding-left: 6px; }
.g3 .gbody { padding-left: 9px; }
.g4 .gbody { padding-left: 10px; }
.g6 .gbody { padding-left: 10px; }

.gbody {
  height: 85px;
  display: flex;
  box-sizing: border-box;
}

.glabel {
  height: 18px;
  display: flex;
  align-items: center;
  padding-right: 8px;
  color: #0e6478;
  font-size: 14px;
  letter-spacing: 0;
}

.glabel span {
  flex: 1;
  text-align: center;
  margin-right: 3px;
}

.glabel .caret {
  margin-right: 1px;
}

.g6 .glabel {
  padding-right: 0;
}

.g6 .glabel span {
  margin-right: 0;
}

.big {
  display: flex;
  flex-direction: column;
  align-items: center;
  flex: none;
  padding-top: 4px;
  box-sizing: border-box;
  white-space: nowrap;
}

.big.off {
  color: #c2c2c2;
}

.bigicon {
  width: 34px;
  height: 34px;
  margin-bottom: 3px;
}

.big span {
  line-height: 20px;
  height: 20px;
}

.big .down {
  margin-top: 11px;
}

.w71 { width: 71.5px; }
.fill { width: 54px; }

.stack {
  width: 25px;
  margin-left: 2px;
  padding-top: 10px;
  display: flex;
  flex-direction: column;
  gap: 19px;
}

.sm {
  width: 24px;
  height: 24px;
}

.more {
  width: 38px;
  margin-left: 7px;
}

.morebox {
  width: 38px;
  height: 35px;
  box-sizing: border-box;
  border: 1px solid #ddd;
  border-radius: 4px;
  display: flex;
  align-items: center;
  justify-content: center;
  margin-bottom: 2px;
}

.mi {
  width: 24px;
  height: 24px;
}

.pick {
  width: 60px;
}

.hatchcol {
  margin-left: 4px;
  padding-top: 9px;
  display: flex;
  flex-direction: column;
  gap: 7px;
}

.hatch {
  width: 31px;
  height: 30px;
  background: #cde3ec;
  border: 1px solid #bcd8e4;
  box-sizing: border-box;
}

.hatch svg {
  width: 29px;
  height: 28px;
  display: block;
}

.colorcol {
  width: 47px;
  margin-left: 5px;
  padding-top: 10px;
}

.withcaret {
  display: flex;
  align-items: center;
  gap: 10px;
  height: 28px;
}

.tc {
  width: 24px;
  height: 27px;
  display: block;
}

.tc.doc {
  width: 26px;
  height: 26px;
  margin-top: 9px;
}

.arrows {
  width: 34px;
  margin-left: 7px;
  padding-top: 7px;
  display: flex;
  flex-direction: column;
  align-items: center;
  gap: 7px;
}

.arr {
  width: 12px;
  height: 14px;
}

.lay {
  width: 16px;
  height: 18px;
}

.g4 .more {
  margin-left: 4px;
}

.player {
  height: 85px;
  padding: 6px 0 0 6px;
  box-sizing: border-box;
  display: grid;
  grid-template-columns: 55px 44px 56px;
  grid-template-rows: 36px 36px;
}

.pcell {
  display: flex;
  align-items: center;
  gap: 6px;
}

.pcell .caret {
  margin-left: 3px;
}

.circle {
  width: 24px;
  height: 24px;
  flex: none;
  fill: none;
  stroke: #333;
  stroke-width: 1;
  margin-left: 6px;
}

.pcell.mid .circle {
  margin-left: 2px;
}

.pcell.last .circle {
  margin-left: 7px;
}

.pcell.last .caret {
  margin-left: 2px;
}

.speed {
  width: 39px;
  height: 26px;
  margin-left: 2px;
  border: 1px solid #999;
  box-sizing: border-box;
  display: flex;
  align-items: center;
  justify-content: space-between;
  padding: 0 8px 0 2px;
  font: 14px "Liberation Sans", sans-serif;
}

.speed .caret {
  margin: 0;
}

.ipw {
  width: 62px;
}

.ipw.next {
  width: 40px;
  margin-left: 1px;
}

.blank {
  height: 37px !important;
}

/* 选择条 */
.selbar {
  height: 32px;
  flex: none;
  display: flex;
  align-items: center;
  box-sizing: border-box;
  border-bottom: 1px solid #999;
  font-size: 14px;
}

.menu {
  width: 103px;
  flex: none;
  box-sizing: border-box;
  padding-left: 13px;
  display: flex;
  align-items: center;
}

.burger {
  width: 11px;
  height: 7px;
  margin-right: 5px;
  border-top: 1px solid #222;
  border-bottom: 1px solid #222;
  position: relative;
}

.burger::after {
  content: "";
  position: absolute;
  left: 0;
  right: 0;
  top: 3px;
  height: 1px;
  background: #222;
}

.menu .caret {
  margin-left: 5px;
}

.selsep {
  width: 1px;
  height: 22px;
  flex: none;
  background: #ddd;
}

.seli {
  width: 16px;
  height: 16px;
  flex: none;
  margin-left: 11px;
}

.seli + .seli {
  margin-left: 7px;
}

.filter {
  height: 24px;
  box-sizing: border-box;
  border: 1px solid #aaa;
  flex: none;
}

.filter.one {
  width: 166px;
  margin-left: 139px;
}

.filter.two {
  width: 175px;
  margin-left: 9px;
}

.snaps {
  display: flex;
  gap: 2px;
  margin-left: 311px;
  flex: none;
}

.snap {
  width: 23px;
  height: 23px;
  box-sizing: border-box;
  border: 1px solid transparent;
}

.snap.on {
  background: #cde3ec;
  border-color: #bcd8e4;
}

.snap svg {
  width: 21px;
  height: 21px;
  display: block;
}

/* 主体 */
.body {
  flex: 1;
  min-height: 0;
  display: flex;
}

.rail {
  position: relative;
  width: 32px;
  flex: none;
  box-sizing: border-box;
  border-right: 1px solid #999;
  background: #dcdcdc;
  display: flex;
  flex-direction: column;
  align-items: center;
}

.railicon {
  flex: none;
}

.railscroll {
  position: absolute;
  left: 3px;
  top: 522px;
  width: 7px;
  height: 58px;
  border-radius: 3px;
  overflow: hidden;
  background: linear-gradient(#3cc46e, #86e8a4);
}

.railscroll i {
  display: block;
  height: 21px;
  background: #999;
}

.rail2 {
  width: 42px;
  flex: none;
  padding-top: 9px;
  box-sizing: border-box;
  display: flex;
  flex-direction: column;
  align-items: center;
  background: #fff;
}

.palitem {
  height: 32px;
  display: flex;
  align-items: center;
  flex: none;
}

.palitem svg {
  width: 24px;
  height: 24px;
}

.rail2 hr {
  width: 26px;
  margin: 5px 0 0;
  border: 0;
  border-top: 1px solid #ddd;
}

.stage {
  flex: 1;
  min-width: 0;
  display: flex;
  flex-direction: column;
}

.doctabs {
  height: 25px;
  flex: none;
  box-sizing: border-box;
  border-bottom: 2px solid #6f9fb8;
  font-size: 15px;
}

.doctab {
  display: flex;
  align-items: center;
  height: 23px;
  padding-left: 6px;
}

.doctab svg {
  width: 16px;
  height: 16px;
  margin-right: 4px;
}

.view {
  position: relative;
  flex: 1;
  background: linear-gradient(#98bcdb 0%, #cdd9e3 58%, #e4e5e6 78%, #e4e4e4 100%);
}

.scene {
  position: absolute;
  inset: 0;
  width: 100%;
  height: 100%;
}

.rtext {
  font: 10px "Liberation Sans", sans-serif;
  fill: #8e2020;
}

.axis {
  font: 12px "Liberation Sans", sans-serif;
}

.readout {
  position: absolute;
  left: 1033px;
  top: 230px;
  width: 100px;
  height: 31px;
  box-sizing: border-box;
  border: 1px solid #aaa;
  background: #f0f0f0;
  display: flex;
  align-items: center;
  font: 15px "Liberation Sans", sans-serif;
}

.grip {
  width: 7px;
  height: 27px;
  margin: 0 10px 0 2px;
  background: radial-gradient(circle, #aaa 1.1px, transparent 1.3px) 0 0 / 3.500px 3.500px;
}

/* 信息窗口 */
.dialog {
  position: absolute;
  left: 168px;
  top: 170px;
  width: 781px;
  height: 566px;
  box-sizing: border-box;
  background: #f0f0f0;
  border: 1px solid #aaa;
  border-top: 0;
  display: flex;
  flex-direction: column;
}

.dtitle {
  height: 31px;
  flex: none;
  margin: 0 -1px;
  background: #5299b5;
  color: #fff;
  display: flex;
  align-items: center;
  font-size: 15px;
}

.dgear {
  width: 14px;
  height: 14px;
  margin: 0 8px 3px 6px;
}

.dname {
  flex: 1;
}

.dq {
  font: bold 16px "Liberation Sans", sans-serif;
  margin-right: 13px;
}

.dctl {
  width: 14px;
  height: 14px;
}

.dctl.min { margin-right: 10px; }
.dctl.max { margin-right: 11px; }
.dctl.close { margin-right: 7px; }

.dtools {
  display: flex;
  gap: 2px;
  padding: 4px 0 2px 8px;
  flex: none;
}

.dbtn {
  width: 32px;
  height: 32px;
  box-sizing: border-box;
  border: 1px solid #a6a6a6;
  display: flex;
  align-items: center;
  justify-content: center;
}

.dbtn.active {
  background: #fde08c;
  border-color: #fde08c;
}

.dbtn svg {
  width: 26px;
  height: 26px;
}

.dtext {
  height: 484px;
  margin: 0 8px;
  background: #fff;
  border: 1px solid #555;
  box-sizing: border-box;
}
</style>
